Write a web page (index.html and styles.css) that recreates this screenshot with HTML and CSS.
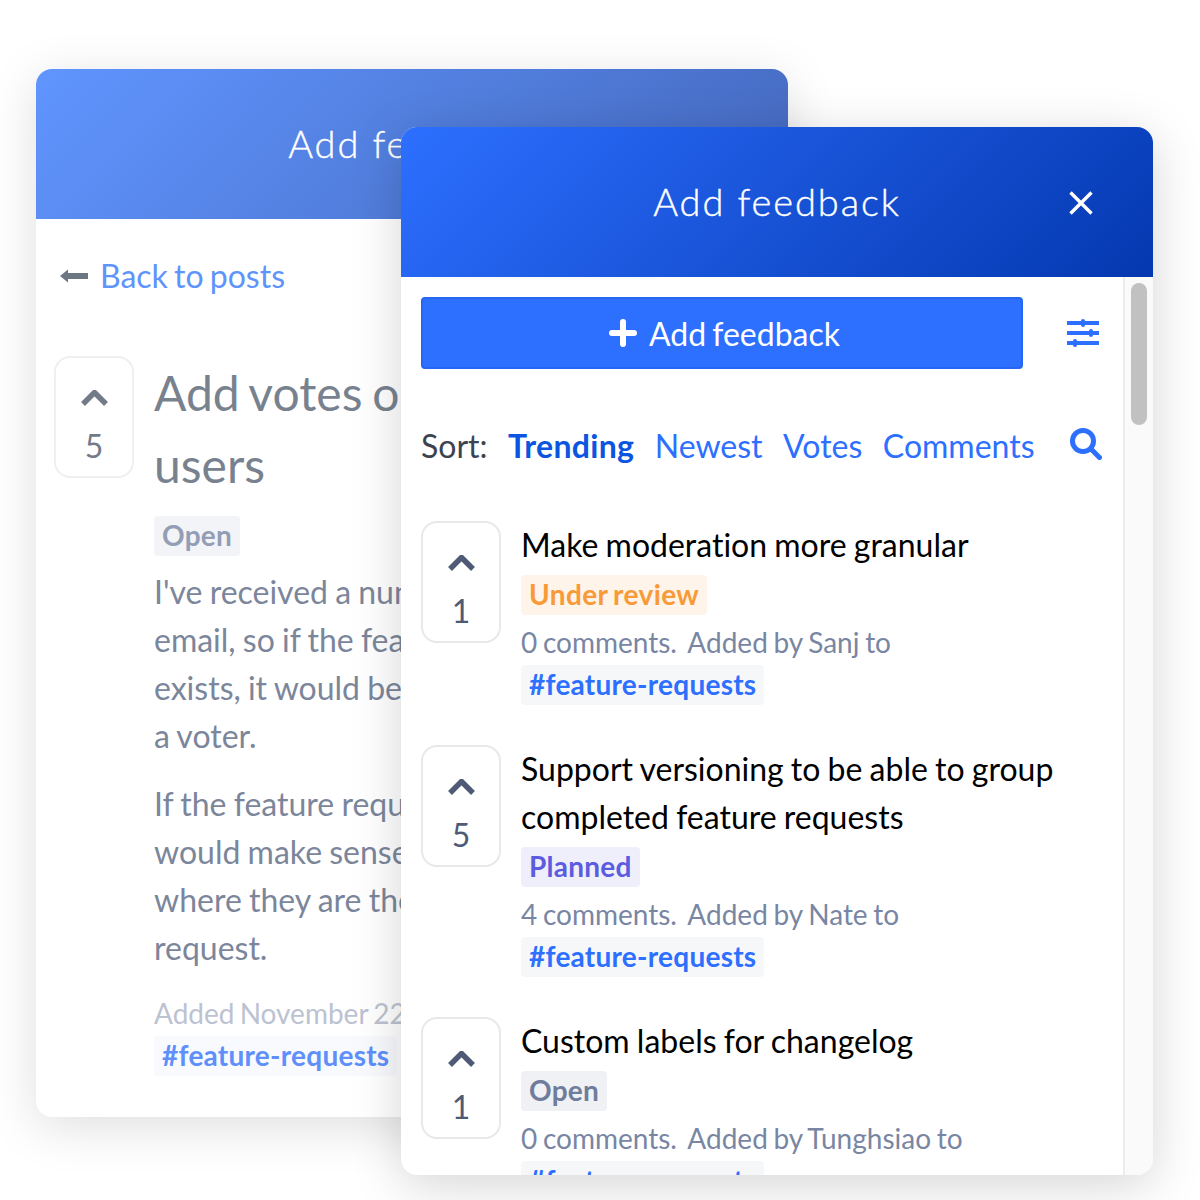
FILE: index.html
```html
<!DOCTYPE html>
<html lang="en">

<head>
    <meta charset="UTF-8">
    <meta name="viewport" content="width=device-width, initial-scale=1.0">
    <title>Add feedback</title>
    <link rel="stylesheet" href="styles.css">
</head>

<body>
    <div class="stage">
        <section class="window window-back">
            <header class="window-header">
                <h1>Add feedback</h1>
            </header>
            <div class="post">
                <a class="back-link">
                    <svg class="back-arrow" viewBox="0 0 28 14"><path d="M0 7 8 .5V4H28V10H8V13.500Z" /></svg>
                    Back to posts
                </a>
                <div class="post-main">
                    <div class="vote vote-back">
                        <svg class="chevron" viewBox="0 0 27 16"><path d="M2 14 13.500 2.500 25 14" /></svg>
                        <span>5</span>
                    </div>
                    <div class="post-body">
                        <h2>Add votes on behalf of<br>users</h2>
                        <span class="tag tag-open-back">Open</span>
                        <p>I've received a number of requests by<br>email, so if the feature request already<br>exists, it would be great to add them as<br>a voter.</p>
                        <p>If the feature request doesn't exist, it<br>would make sense to create a new post<br>where they are the author of the<br>request.</p>
                        <div class="post-added">Added November 22</div>
                        <span class="tag tag-channel-back">#feature-requests</span>
                    </div>
                </div>
            </div>
        </section>

        <section class="window window-front">
            <header class="window-header">
                <h1>Add feedback</h1>
                <svg class="close-icon" viewBox="0 0 24 24"><path d="M1.500 1.500 22.500 22.500M22.500 1.500 1.500 22.500" /></svg>
            </header>
            <div class="window-content">
                <div class="feed">
                    <div class="feed-actions">
                        <button class="add-btn">
                            <svg class="plus-icon" viewBox="0 0 28 28"><path d="M14 3V25M3 14H25" /></svg>
                            Add feedback
                        </button>
                        <svg class="filter-icon" viewBox="0 0 32 28">
                            <path d="M0 4H32M0 14H32M0 24H32" />
                            <path class="knob" d="M16 2V6M24 12V16M8 22V26" />
                        </svg>
                    </div>
                    <div class="sort-row">
                        <span class="sort-label">Sort:</span>
                        <a class="sort-link active">Trending</a>
                        <a class="sort-link">Newest</a>
                        <a class="sort-link">Votes</a>
                        <a class="sort-link">Comments</a>
                        <svg class="search-icon" viewBox="0 0 32 32"><circle cx="13" cy="13" r="10.500" /><path d="M21 21 29.500 29.500" /></svg>
                    </div>

                    <article class="item">
                        <div class="vote">
                            <svg class="chevron" viewBox="0 0 27 16"><path d="M2 14 13.500 2.500 25 14" /></svg>
                            <span>1</span>
                        </div>
                        <div class="item-body">
                            <h3>Make moderation more granular</h3>
                            <span class="tag tag-review">Under review</span>
                            <div class="item-meta">0 comments.&nbsp; Added by Sanj to</div>
                            <span class="tag tag-channel">#feature-requests</span>
                        </div>
                    </article>

                    <article class="item">
                        <div class="vote">
                            <svg class="chevron" viewBox="0 0 27 16"><path d="M2 14 13.500 2.500 25 14" /></svg>
                            <span>5</span>
                        </div>
                        <div class="item-body">
                            <h3>Support versioning to be able to group completed feature requests</h3>
                            <span class="tag tag-planned">Planned</span>
                            <div class="item-meta">4 comments.&nbsp; Added by Nate to</div>
                            <span class="tag tag-channel">#feature-requests</span>
                        </div>
                    </article>

                    <article class="item">
                        <div class="vote">
                            <svg class="chevron" viewBox="0 0 27 16"><path d="M2 14 13.500 2.500 25 14" /></svg>
                            <span>1</span>
                        </div>
                        <div class="item-body">
                            <h3>Custom labels for changelog</h3>
                            <span class="tag tag-open">Open</span>
                            <div class="item-meta">0 comments.&nbsp; Added by Tunghsiao to</div>
                            <span class="tag tag-channel">#feature-requests</span>
                        </div>
                    </article>
                </div>
                <div class="scroll-track">
                    <div class="scroll-thumb"></div>
                </div>
            </div>
        </section>
    </div>
</body>

</html>
```

FILE: styles.css
```css
* {
    box-sizing: border-box;
    margin: 0;
    padding: 0;
}

body {
    font-family: 'Lato', sans-serif;
    font-variant-ligatures: none;
    word-spacing: -2px;
    background-color: #fff;
}

.stage {
    position: relative;
    width: 1200px;
    height: 1200px;
    overflow: hidden;
}

/* windows sit on a free canvas */
.window {
    position: absolute;
    width: 752px;
    height: 1048px;
    background-color: #fff;
    border-radius: 16px;
    overflow: hidden;
    display: flex;
    flex-direction: column;
}

.window-back {
    left: 36px;
    top: 69px;
    box-shadow: 0 10px 50px rgba(0, 0, 0, 0.13);
}

.window-front {
    left: 401px;
    top: 127px;
    box-shadow: 0 10px 50px rgba(0, 0, 0, 0.17);
}

.window-header {
    position: relative;
    flex: none;
    height: 150px;
    display: flex;
    align-items: center;
    justify-content: center;
    color: #fff;
}

.window-front .window-header {
    background: linear-gradient(135deg, #2d6fff 0%, #0438b0 100%);
}

.window-back .window-header {
    background: linear-gradient(135deg, #6095ff 0%, #4468bd 100%);
}

.window-header h1 {
    font-size: 38px;
    font-weight: 300;
    letter-spacing: 1.9px;
    word-spacing: 0;
    -webkit-text-stroke: 0.4px #fff;
    margin-bottom: 2px;
}

.close-icon {
    position: absolute;
    right: 60px;
    top: 64px;
    width: 24px;
    height: 24px;
    fill: none;
    stroke: #fff;
    stroke-width: 3.4;
}

/* back window */
.post {
    padding: 33px 18px 0;
}

.back-link {
    display: flex;
    align-items: center;
    gap: 12px;
    padding-left: 6px;
    font-size: 32px;
    line-height: 48px;
    color: #5e94fb;
}

.back-arrow {
    width: 28px;
    height: 14px;
    fill: #6d7683;
}

.post-main {
    display: flex;
    gap: 20px;
    margin-top: 56px;
}

.post-body {
    width: 560px;
    flex: none;
    white-space: nowrap;
}

.post-body h2 {
    font-size: 48px;
    line-height: 72px;
    font-weight: 400;
    word-spacing: -2.5px;
    color: #78828f;
    margin-top: 1px;
    margin-bottom: 15px;
}

.post-body p {
    font-size: 32px;
    line-height: 48px;
    word-spacing: -1px;
    color: #7b869b;
    margin-bottom: 20px;
}

.post-body .tag-open-back {
    margin-bottom: 12px;
}

.post-added {
    font-size: 28px;
    line-height: 40px;
    color: #bcc2d1;
    margin-top: 21px;
    margin-bottom: 3px;
}

/* votes */
.vote {
    flex: none;
    width: 80px;
    height: 122px;
    border: 2px solid #e8e8e8;
    border-radius: 16px;
    display: flex;
    flex-direction: column;
    align-items: center;
    padding-top: 32px;
    font-size: 32px;
    line-height: 40px;
    color: #4f5b76;
}

.vote-back {
    border-color: #efefef;
    color: #737b89;
}

.vote span {
    margin-top: 20px;
}

.chevron {
    flex: none;
    width: 27px;
    height: 16px;
    fill: none;
    stroke: currentColor;
    stroke-width: 5.5;
    stroke-linejoin: round;
}

/* tags */
.tag {
    display: inline-block;
    height: 40px;
    line-height: 38px;
    padding: 0 8px;
    border-radius: 4px;
    font-size: 28px;
    font-weight: 700;
    letter-spacing: 0.25px;
    white-space: nowrap;
}

.tag-review {
    background-color: #fef4ea;
    color: #f99a38;
    letter-spacing: 0.4px;
}

.tag-planned {
    background-color: #efeffb;
    color: #5c5ce0;
}

.tag-open {
    background-color: #f0f1f4;
    color: #6e7d9c;
}

.tag-channel {
    background-color: #f6f7f9;
    color: #2d6fff;
}

.tag-open-back {
    background-color: #f3f4f7;
    color: #939db5;
}

.tag-channel-back {
    background-color: #f8fafd;
    color: #5e8ffa;
}

/* front window */
.window-content {
    flex: 1;
    min-height: 0;
    display: flex;
    overflow: hidden;
}

.feed {
    flex: 1;
    padding: 20px 20px 0;
    overflow: hidden;
}

.feed-actions {
    display: flex;
    align-items: center;
    justify-content: space-between;
    padding-right: 4px;
}

.add-btn {
    width: 602px;
    height: 72px;
    display: flex;
    align-items: center;
    justify-content: center;
    gap: 12px;
    padding-left: 5px;
    background-color: #2d6fff;
    border: 2px solid #2566f2;
    border-radius: 4px;
    color: #fff;
    font-family: inherit;
    font-variant-ligatures: none;
    word-spacing: -2px;
    font-size: 32px;
}

.plus-icon {
    width: 28px;
    height: 28px;
    fill: none;
    stroke: #fff;
    stroke-width: 6;
    stroke-linecap: round;
}

.filter-icon {
    width: 32px;
    height: 28px;
    fill: none;
    stroke: #2d6fff;
    stroke-width: 4;
}

.filter-icon .knob {
    stroke-linecap: round;
}

.sort-row {
    display: flex;
    align-items: center;
    height: 48px;
    margin-top: 52px;
    margin-bottom: 52px;
    font-size: 32px;
    gap: 20.5px;
}

.sort-label {
    color: #3c4350;
}

.sort-link {
    color: #2d6fff;
}

.sort-link.active {
    font-weight: 700;
    letter-spacing: 0.3px;
    color: #0b55e0;
}

.search-icon {
    width: 32px;
    height: 32px;
    margin-left: 15px;
    margin-top: -2px;
    fill: none;
    stroke: #2d6fff;
    stroke-width: 5;
    stroke-linecap: round;
}

/* feed items */
.item {
    display: flex;
    gap: 20px;
    margin-bottom: 40px;
}

.item-body {
    flex: 1;
    min-width: 0;
}

.item-body h3 {
    font-size: 32px;
    line-height: 48px;
    font-weight: 400;
    word-spacing: -1px;
    color: #000;
    margin-bottom: 6px;
}

.item-meta {
    font-size: 28px;
    line-height: 40px;
    word-spacing: -1.5px;
    color: #7886a3;
    margin-top: 7px;
    margin-bottom: 3px;
}

.scroll-track {
    flex: none;
    width: 30px;
    background-color: #fafafa;
    border-left: 2px solid #ececec;
    padding: 6px 6px 0 6px;
}

.scroll-thumb {
    width: 16px;
    height: 142px;
    border-radius: 8px;
    background-color: #c1c1c1;
}
```
